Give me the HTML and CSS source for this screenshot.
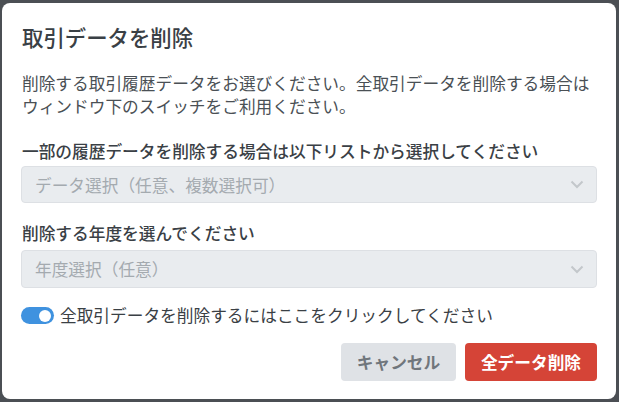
FILE: index.html
```html
<!DOCTYPE html>
<html lang="ja">
<head>
<meta charset="utf-8">
<link rel="stylesheet" href="styles.css">
</head>
<body>
<div class="backdrop">
  <div class="modal">
    <h1 class="title">取引データを削除</h1>
    <p class="desc">削除する取引履歴データをお選びください。全取引データを削除する場合はウィンドウ下のスイッチをご利用ください。</p>
    <label class="label">一部の履歴データを削除する場合は以下リストから選択してください</label>
    <div class="select">
      <span class="placeholder">データ選択（任意、複数選択可）</span>
      <svg class="chev" width="14" height="9" viewBox="0 0 14 9"><path d="M1.5 1.5 L7 7 L12.5 1.5" fill="none" stroke="currentColor" stroke-width="2"/></svg>
    </div>
    <label class="label label2">削除する年度を選んでください</label>
    <div class="select">
      <span class="placeholder">年度選択（任意）</span>
      <svg class="chev" width="14" height="9" viewBox="0 0 14 9"><path d="M1.5 1.5 L7 7 L12.5 1.5" fill="none" stroke="currentColor" stroke-width="2"/></svg>
    </div>
    <div class="switch-row">
      <span class="switch"><span class="knob"></span></span>
      <span class="switch-text">全取引データを削除するにはここをクリックしてください</span>
    </div>
    <div class="footer">
      <button class="btn btn-cancel">キャンセル</button>
      <button class="btn btn-danger">全データ削除</button>
    </div>
  </div>
</div>
</body>
</html>
```

FILE: styles.css
```css
html, body {
  margin: 0;
  padding: 0;
  width: 619px;
  height: 402px;
  overflow: hidden;
}
body {
  background: #4b4f54;
  font-family: "Noto Sans CJK JP", "Noto Sans", sans-serif;
}
.backdrop {
  padding: 3px 3px 0 2px;
}
.modal {
  width: 614px;
  height: 396px;
  box-sizing: border-box;
  background: #ffffff;
  border-radius: 8px;
  padding: 18px 19px 18px 19px;
  display: flex;
  flex-direction: column;
}
.title {
  margin: 0;
  font-size: 21.4px;
  line-height: 32px;
  font-weight: 500;
  color: #3a4045;
  padding-left: 1px;
}
.desc {
  margin: 19px 0 0 0;
  font-size: 16.7px;
  line-height: 23px;
  color: #4a5055;
  padding-left: 1px;
}
.label {
  display: block;
  margin-top: 22px;
  font-size: 16.7px;
  line-height: 23px;
  font-weight: 500;
  color: #3a4045;
  padding-left: 1px;
}
.label2 {
  margin-top: 19px;
}
.select {
  margin-top: 3px;
  height: 37px;
  box-sizing: border-box;
  background: #e9ecef;
  border: 1px solid #dde0e4;
  border-radius: 4px;
  display: flex;
  align-items: center;
  justify-content: space-between;
  padding: 0 12px 0 13px;
}
.label2 + .select {
  margin-top: 5px;
  height: 38px;
}
.placeholder {
  font-size: 16.7px;
  color: #a4aaaf;
}
.chev {
  color: #c3c7cb;
}
.switch-row {
  margin-top: 16px;
  display: flex;
  align-items: center;
  gap: 6px;
}
.switch {
  width: 33px;
  height: 17px;
  border-radius: 9px;
  background: #3f92df;
  display: flex;
  align-items: center;
  justify-content: flex-end;
  padding-right: 3px;
  box-sizing: border-box;
}
.knob {
  width: 12px;
  height: 12px;
  border-radius: 50%;
  background: #ffffff;
}
.switch-text {
  font-size: 16.7px;
  line-height: 23px;
  color: #3a4045;
}
.footer {
  margin-top: auto;
  display: flex;
  justify-content: flex-end;
  gap: 9px;
}
.btn {
  height: 38px;
  border: none;
  border-radius: 4px;
  font-family: "Noto Sans CJK JP", "Noto Sans", sans-serif;
  font-size: 16.7px;
  font-weight: 700;
  padding: 0;
}
.btn-cancel {
  width: 115px;
  background: #dfe2e6;
  color: #70767c;
}
.btn-danger {
  width: 132px;
  background: #d54437;
  color: #ffffff;
}
```
